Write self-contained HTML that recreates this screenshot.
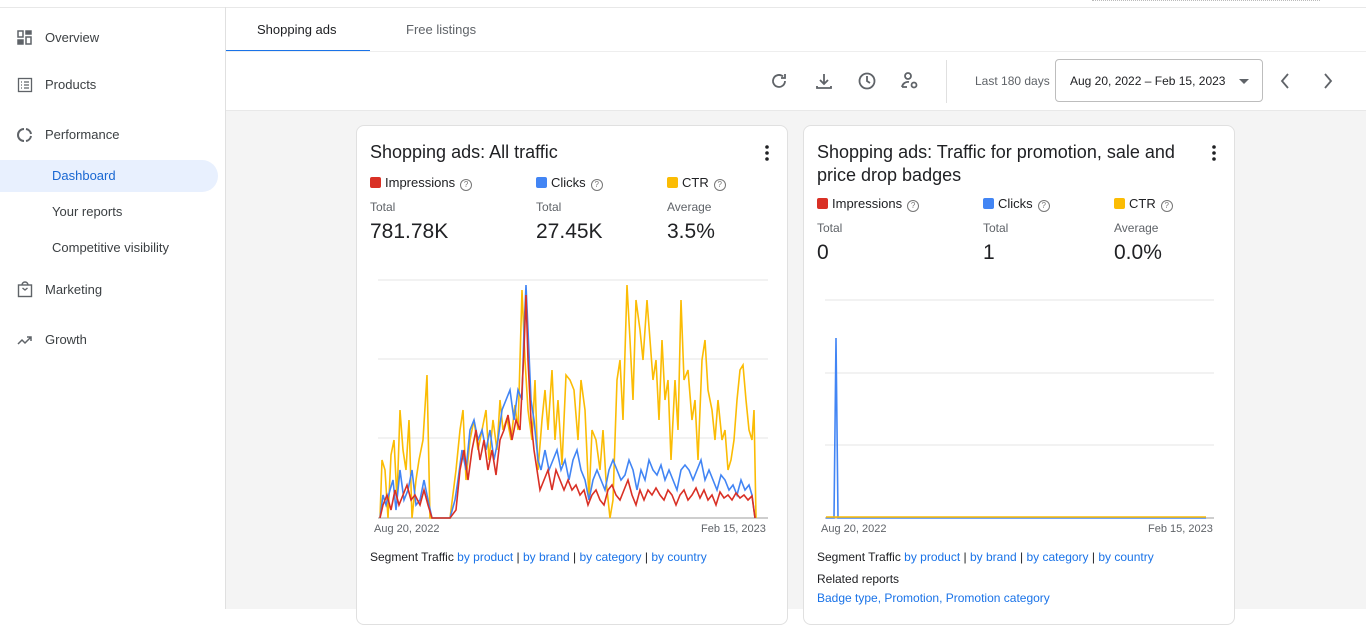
<!DOCTYPE html>
<html><head><style>
*{margin:0;padding:0;box-sizing:border-box}
body{width:1366px;height:609px;overflow:hidden;font-family:"Liberation Sans",Arial,sans-serif;color:#202124;background:#fff;position:relative}
.a{position:absolute;white-space:nowrap}
.nav{font-size:13px;color:#3c4043}
.card{position:absolute;background:#fff;border:1px solid #e0e0e0;border-radius:8px}
.lg{font-size:13px;color:#202124}
.sq{display:inline-block;width:11px;height:11px;border-radius:2px;vertical-align:-1px;margin-right:4px}
.q{display:inline-block;width:12px;height:12px;border:1px solid #777;border-radius:50%;font-size:8px;line-height:10px;text-align:center;color:#777;margin-left:5px;vertical-align:0}
.sm{font-size:12px;color:#5f6368}
.big{font-size:21px;color:#202124}
.lnk{color:#1a73e8}
</style></head><body>
<div class="a" style="left:0;top:7px;width:1366px;height:1px;background:#e8e8e8"></div>
<div class="a" style="left:1092px;top:0;width:228px;border-top:1px dotted #bbb"></div>
<div class="a" style="left:225px;top:7px;width:1px;height:602px;background:#e0e0e0"></div>
<svg class="a" style="left:17px;top:30px" width="16" height="16" viewBox="0 0 16 16" fill="none" stroke="#5f6368" stroke-width="1.5"><rect x="1" y="1" width="5" height="6"/><rect x="9" y="1" width="5" height="3" fill="#5f6368"/><rect x="1" y="10" width="5" height="4" fill="#5f6368"/><rect x="9" y="7" width="5" height="7"/></svg>
<div class="a nav" style="left:45px;top:30px">Overview</div>
<svg class="a" style="left:17px;top:77px" width="16" height="16" viewBox="0 0 16 16" fill="none" stroke="#5f6368" stroke-width="1.3"><rect x="1.5" y="1.5" width="13" height="13"/><path d="M4 5h1M4 8h1M4 11h1M7 5h5M7 8h5M7 11h5"/></svg>
<div class="a nav" style="left:45px;top:77px">Products</div>
<svg class="a" style="left:17px;top:127px" width="16" height="16" viewBox="0 0 16 16" fill="none" stroke="#5f6368" stroke-width="2"><path d="M9 2a6 6 0 0 1 5 5M14 9a6 6 0 0 1-5 5M7 14A6 6 0 0 1 7 2"/></svg>
<div class="a nav" style="left:45px;top:127px">Performance</div>
<div class="a" style="left:0;top:160px;width:218px;height:32px;background:#e8f0fe;border-radius:0 16px 16px 0"></div>
<div class="a nav" style="left:52px;top:168px;color:#1967d2">Dashboard</div>
<div class="a nav" style="left:52px;top:204px">Your reports</div>
<div class="a nav" style="left:52px;top:240px">Competitive visibility</div>
<svg class="a" style="left:17px;top:281px" width="16" height="17" viewBox="0 0 16 17" fill="none" stroke="#5f6368" stroke-width="1.4"><rect x="1.5" y="4" width="13" height="11.5"/><path d="M5 4a3 3 0 0 1 6 0M5.5 7l2.5 2 2.5-2"/></svg>
<div class="a nav" style="left:45px;top:282px">Marketing</div>
<svg class="a" style="left:17px;top:334px" width="16" height="12" viewBox="0 0 16 12" fill="none" stroke="#5f6368" stroke-width="1.5"><path d="M1 10l4-4 3 3 6-6M10 3h4v4"/></svg>
<div class="a nav" style="left:45px;top:332px">Growth</div>
<div class="a" style="left:257px;top:22px;font-size:13px;color:#202124">Shopping ads</div>
<div class="a" style="left:406px;top:22px;font-size:13px;color:#5f6368">Free listings</div>
<div class="a" style="left:226px;top:50px;width:144px;height:2px;background:#1a73e8"></div>
<div class="a" style="left:226px;top:51px;width:1140px;height:1px;background:#eee"></div>
<svg class="a" style="left:770px;top:71px" width="160" height="20" viewBox="0 0 160 20" fill="none" stroke="#5f6368" stroke-width="1.8">
<path d="M15 10a6 6 0 1 1-2-4.5M15 3v4h-4"/>
<path d="M54 3v10M50 9l4 4 4-4M47 15v2h14v-2"/>
<circle cx="97" cy="10" r="7.5"/><path d="M97 5v5l3 2"/>
<circle cx="138" cy="5" r="3"/><path d="M132 16a6 6 0 0 1 7-5M132 16h5"/><circle cx="144" cy="14" r="2.5"/>
</svg>
<div class="a" style="left:946px;top:60px;width:1px;height:43px;background:#e0e0e0"></div>
<div class="a" style="left:975px;top:74px;font-size:12px;color:#5f6368">Last 180 days</div>
<div class="a" style="left:1055px;top:59px;width:208px;height:43px;border:1px solid #bdbdbd;border-radius:4px"></div>
<div class="a" style="left:1070px;top:74px;font-size:12px;color:#202124">Aug 20, 2022 – Feb 15, 2023</div>
<div class="a" style="left:1239px;top:79px;border:5px solid transparent;border-top:5px solid #5f6368"></div>
<svg class="a" style="left:1275px;top:72px" width="65" height="18" viewBox="0 0 65 18" fill="none" stroke="#5f6368" stroke-width="1.8"><path d="M13 2l-6 7 6 7M50 2l6 7-6 7"/></svg>
<div class="a" style="left:226px;top:110px;width:1140px;height:499px;background:#f4f4f4;border-top:1px solid #e8e8e8"></div>
<div class="card" style="left:356px;top:125px;width:432px;height:500px"></div>
<div class="card" style="left:803px;top:125px;width:432px;height:500px"></div>
<div class="a" style="left:370px;top:142px;font-size:18px">Shopping ads: All traffic</div>
<svg class="a" style="left:763px;top:145px" width="8" height="16"><circle cx="4" cy="2" r="1.8" fill="#202124"/><circle cx="4" cy="8" r="1.8" fill="#202124"/><circle cx="4" cy="14" r="1.8" fill="#202124"/></svg>
<div class="a lg" style="left:370px;top:175px"><span class="sq" style="background:#d93025"></span>Impressions<span class="q">?</span></div>
<div class="a lg" style="left:536px;top:175px"><span class="sq" style="background:#4285f4"></span>Clicks<span class="q">?</span></div>
<div class="a lg" style="left:667px;top:175px"><span class="sq" style="background:#fbbc04"></span>CTR<span class="q">?</span></div>
<div class="a sm" style="left:370px;top:200px">Total</div><div class="a sm" style="left:536px;top:200px">Total</div><div class="a sm" style="left:667px;top:200px">Average</div>
<div class="a big" style="left:370px;top:220px">781.78K</div><div class="a big" style="left:536px;top:220px">27.45K</div><div class="a big" style="left:667px;top:220px">3.5%</div>
<div class="a" style="left:817px;top:141px;font-size:18px;line-height:23px;white-space:normal;width:380px">Shopping ads: Traffic for promotion, sale and price drop badges</div>
<svg class="a" style="left:1210px;top:145px" width="8" height="16"><circle cx="4" cy="2" r="1.8" fill="#202124"/><circle cx="4" cy="8" r="1.8" fill="#202124"/><circle cx="4" cy="14" r="1.8" fill="#202124"/></svg>
<div class="a lg" style="left:817px;top:196px"><span class="sq" style="background:#d93025"></span>Impressions<span class="q">?</span></div>
<div class="a lg" style="left:983px;top:196px"><span class="sq" style="background:#4285f4"></span>Clicks<span class="q">?</span></div>
<div class="a lg" style="left:1114px;top:196px"><span class="sq" style="background:#fbbc04"></span>CTR<span class="q">?</span></div>
<div class="a sm" style="left:817px;top:221px">Total</div><div class="a sm" style="left:983px;top:221px">Total</div><div class="a sm" style="left:1114px;top:221px">Average</div>
<div class="a big" style="left:817px;top:241px">0</div><div class="a big" style="left:983px;top:241px">1</div><div class="a big" style="left:1114px;top:241px">0.0%</div>
<svg class="a" style="left:0;top:0" width="1366" height="609" fill="none">
<g stroke="#e6e6e6" stroke-width="1"><path d="M378 280H768M378 359H768M378 438H768M825 300H1214M825 373H1214M825 445H1214"/></g>
<g stroke="#9e9e9e"><path d="M378 518H768M825 518H1214"/></g>
<polyline stroke="#fbbc04" stroke-width="1.6" points="380,518 382,460 385,470 388,518 391,455 394,440 397,500 400,410 403,450 406,470 409,420 412,518 416,480 419,460 423,440 427,375 430,518 440,518 450,518 456,470 460,430 463,410 466,480 470,440 474,420 478,450 482,430 486,410 489,460 493,420 497,450 500,400 503,430 507,418 511,440 515,405 518,430 522,290 525,360 528,410 532,440 535,380 538,470 542,420 545,390 548,430 552,370 555,440 558,400 562,465 566,375 570,380 574,390 578,440 581,380 585,410 589,500 592,430 596,440 600,470 603,430 606,480 610,518 613,500 617,380 620,360 623,420 627,285 630,340 633,400 636,300 640,330 643,360 647,300 650,340 653,380 656,360 659,420 662,340 665,400 668,380 671,460 675,380 678,430 681,300 684,380 688,370 692,420 695,400 698,460 702,360 705,340 708,390 712,410 715,440 718,400 722,440 725,430 728,470 731,460 734,440 737,400 740,370 743,365 746,400 749,430 752,440 754,410 756,518"/>
<polyline stroke="#4285f4" stroke-width="1.6" points="380,518 383,495 386,505 390,490 393,480 396,510 400,470 404,500 408,490 412,470 416,505 420,500 424,480 428,500 432,518 450,518 455,500 458,480 462,450 466,470 470,430 474,420 478,440 482,430 486,450 490,430 494,460 498,440 502,410 506,400 510,390 514,420 518,390 522,400 524,330 526,285 528,330 531,400 534,420 538,460 541,470 545,450 549,470 553,460 557,450 561,470 565,460 569,480 573,460 577,450 581,470 585,480 589,500 593,480 597,470 601,480 605,490 609,470 613,460 617,470 621,480 625,475 629,460 633,470 637,490 641,470 645,480 649,460 653,470 657,475 661,465 665,480 669,470 673,480 677,490 681,470 685,465 689,470 693,480 697,470 701,460 705,480 709,470 713,480 717,490 721,475 725,480 729,490 733,485 737,495 741,480 745,490 749,485 752,495 755,518"/>
<polyline stroke="#d93025" stroke-width="1.6" points="380,518 383,505 387,495 391,510 395,490 399,505 403,495 407,485 411,500 415,495 420,505 424,490 428,505 432,518 450,518 456,510 460,470 464,450 468,480 472,450 476,430 480,460 484,440 488,470 492,450 496,475 500,440 504,430 508,415 512,440 516,420 520,430 524,350 526,295 528,360 531,420 534,450 537,470 540,490 544,480 548,470 552,490 556,470 560,480 564,490 568,480 572,490 576,485 580,495 584,490 588,505 592,495 596,490 600,500 604,505 608,490 612,485 616,495 620,500 624,490 628,480 632,495 636,505 640,490 644,500 648,490 652,495 656,488 660,495 664,500 668,490 672,495 676,505 680,495 684,490 688,500 692,495 696,488 700,498 704,490 708,500 712,495 716,505 720,492 724,498 728,495 732,500 736,493 740,498 744,495 748,500 752,496 755,518"/>
<polyline stroke="#4285f4" stroke-width="1.6" points="826,518 834,518 836,338 838,518 1206,518"/>
<polyline stroke="#fbbc04" stroke-width="1.6" points="826,517 1206,517"/>
</svg>
<div class="a" style="left:374px;top:523px;font-size:11px;color:#5f6368">Aug 20, 2022</div>
<div class="a" style="left:701px;top:523px;font-size:11px;color:#5f6368">Feb 15, 2023</div>
<div class="a" style="left:821px;top:523px;font-size:11px;color:#5f6368">Aug 20, 2022</div>
<div class="a" style="left:1148px;top:523px;font-size:11px;color:#5f6368">Feb 15, 2023</div>
<div class="a" style="left:370px;top:550px;font-size:12px">Segment Traffic <span class="lnk">by product</span> | <span class="lnk">by brand</span> | <span class="lnk">by category</span> | <span class="lnk">by country</span></div>
<div class="a" style="left:817px;top:550px;font-size:12px">Segment Traffic <span class="lnk">by product</span> | <span class="lnk">by brand</span> | <span class="lnk">by category</span> | <span class="lnk">by country</span></div>
<div class="a" style="left:817px;top:572px;font-size:12px">Related reports</div>
<div class="a lnk" style="left:817px;top:591px;font-size:12px">Badge type, Promotion, Promotion category</div>
</body></html>
